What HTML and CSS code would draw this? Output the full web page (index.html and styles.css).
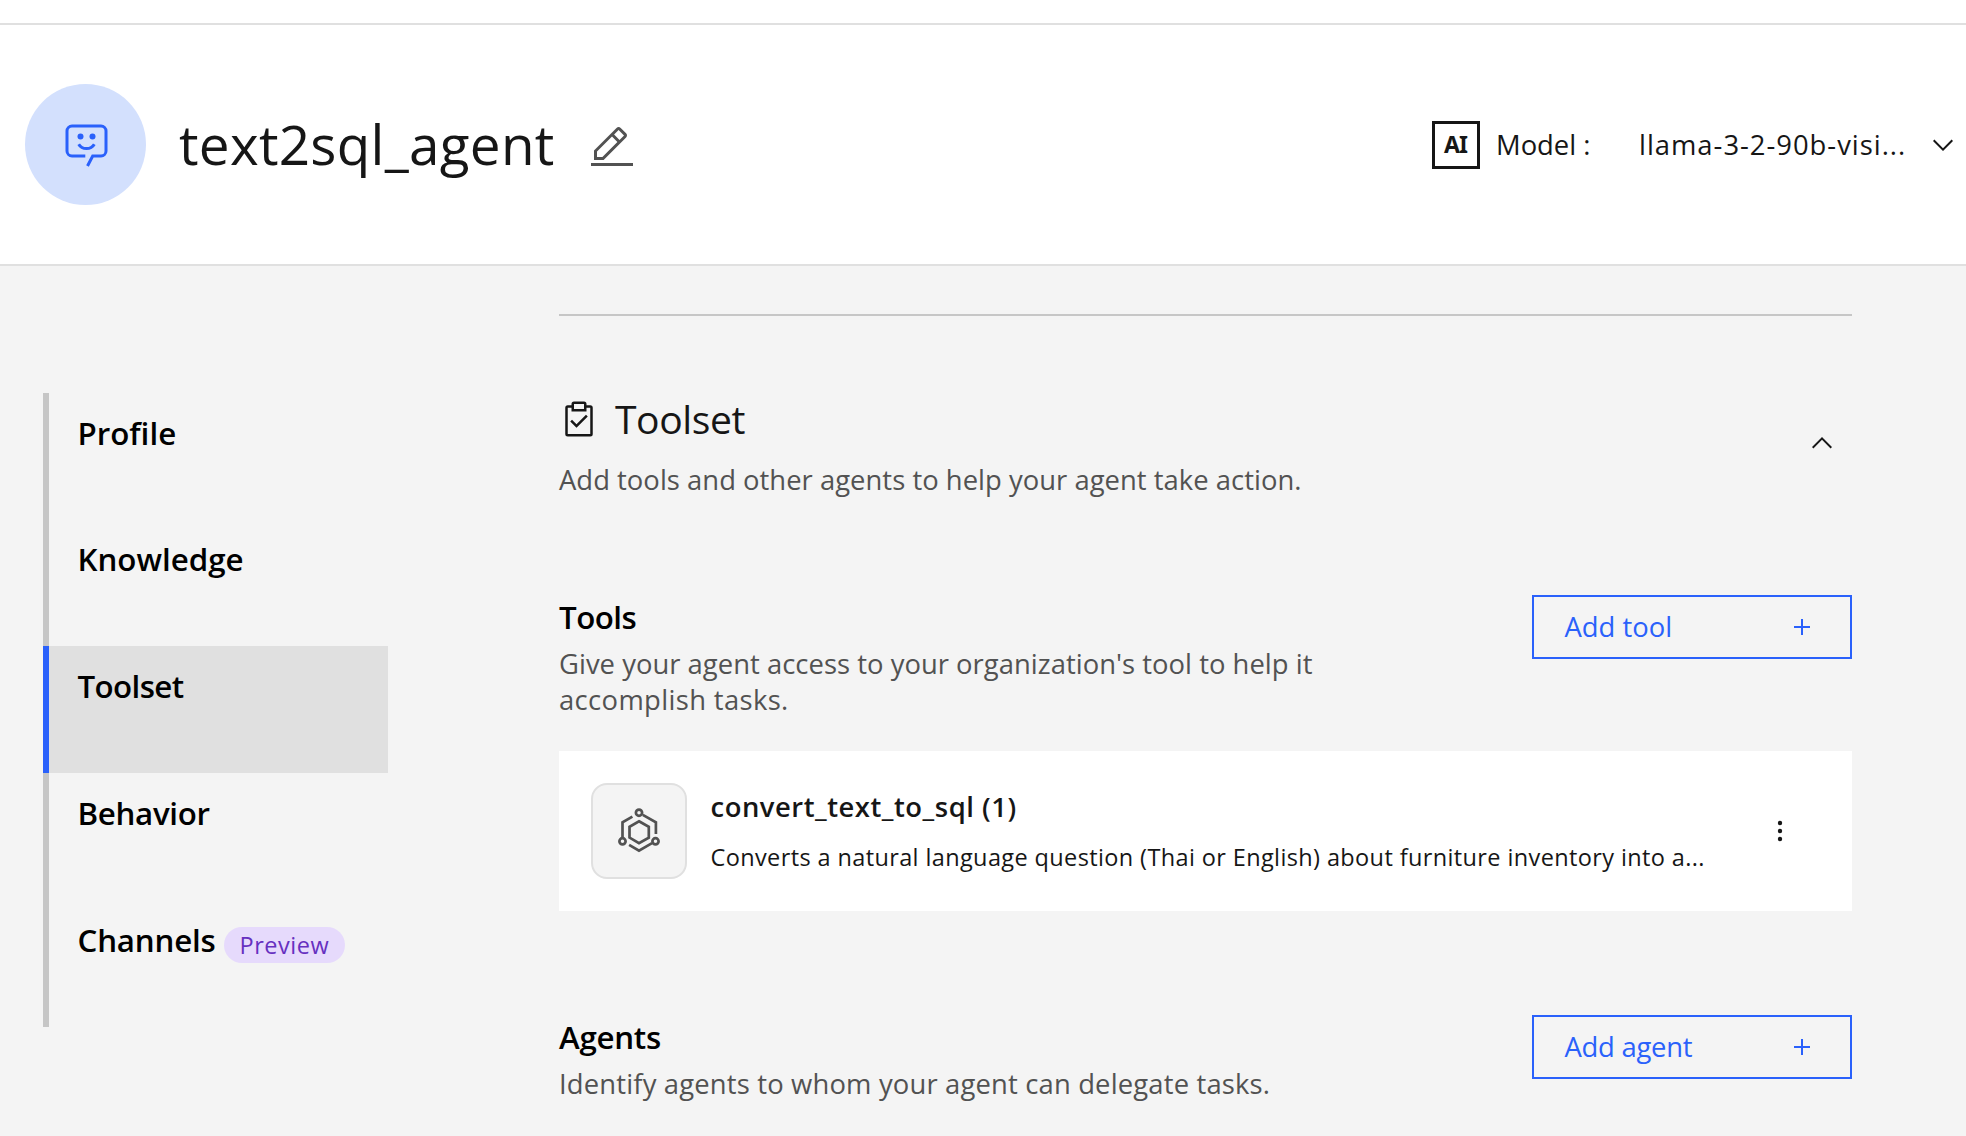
FILE: index.html
```
<!DOCTYPE html>
<html lang="en">
<head>
<meta charset="utf-8">
<title>text2sql_agent</title>
<link rel="stylesheet" href="styles.css">
</head>
<body>
<div class="topbar"></div>
<header class="header">
  <div class="avatar">
    <svg width="48" height="52" viewBox="0 0 48 52" fill="none" stroke="currentColor" stroke-width="3">
      <path d="M23.300 37H10a5 5 0 0 1-5-5V12a5 5 0 0 1 5-5h29a5 5 0 0 1 5 5v20a5 5 0 0 1-5 5h-8.300L25.500 47"/>
      <path d="M16.700 25.200c2 3.500 5 4.400 7.800 4.400s5.800-.9 7.800-4.400"/>
      <circle cx="18.500" cy="17.500" r="3" fill="currentColor" stroke="none"/>
      <circle cx="30.500" cy="17.500" r="3" fill="currentColor" stroke="none"/>
    </svg>
  </div>
  <h1 class="title">text2sql_agent</h1>
  <svg class="edit" width="48" height="48" viewBox="0 0 32 32" fill="currentColor"><path d="M2 26h28v2H2zM25.4 9c.8-.8.8-2 0-2.800l-3.600-3.600c-.8-.8-2-.8-2.800 0l-15 15V24h6.400l15-15zM20.400 4L24 7.600l-3 3L17.400 7l3-3zM6 22v-3.600l10-10 3.600 3.600-10 10H6z"/></svg>
  <div class="model">
    <span class="ai">AI</span>
    <span class="model-label">Model :</span>
    <span class="model-name">llama-3-2-90b-visi...</span>
    <svg width="32" height="32" viewBox="0 0 16 16" fill="currentColor"><path d="M8 11L3 6l.7-.7L8 9.600l4.300-4.300.7.7z"/></svg>
  </div>
</header>
<div class="layout">
  <nav class="nav">
    <a class="nav-item">Profile</a>
    <a class="nav-item">Knowledge</a>
    <a class="nav-item active">Toolset</a>
    <a class="nav-item">Behavior</a>
    <a class="nav-item"><span class="nav-label">Channels</span><span class="tag">Preview</span></a>
  </nav>
  <main class="content">
    <section class="section-head">
      <div>
        <h2 class="section-title">
          <svg width="40" height="40" viewBox="0 0 32 32" fill="currentColor"><path d="M14 20.180L10.410 16.590 9 18l5 5 9-9-1.410-1.420z"/><path d="M25 5h-3V4a2 2 0 0 0-2-2h-8a2 2 0 0 0-2 2v1H7a2 2 0 0 0-2 2v21a2 2 0 0 0 2 2h18a2 2 0 0 0 2-2V7a2 2 0 0 0-2-2zM12 4h8v4h-8zM25 28H7V7h3v3h12V7h3z"/></svg>
          <span>Toolset</span>
        </h2>
        <p class="desc section-desc">Add tools and other agents to help your agent take action.</p>
      </div>
      <svg class="collapse" width="32" height="32" viewBox="0 0 16 16" fill="currentColor"><path d="M8 5l5 5-.7.7L8 6.400l-4.300 4.300L3 10z"/></svg>
    </section>

    <section class="group tools">
      <div class="group-text">
        <h3 class="group-title tight">Tools</h3>
        <p class="desc">Give your agent access to your organization's tool to help it <span class="loose">accomplish tasks.</span></p>
      </div>
      <button class="add"><span>Add tool</span><svg width="32" height="32" viewBox="0 0 32 32" fill="currentColor"><path d="M15 8h2v7h7v2h-7v7h-2v-7H8v-2h7z"/></svg></button>
    </section>

    <article class="card">
      <div class="card-icon">
        <svg width="48" height="52" viewBox="0 -1 48 52" fill="none" stroke="currentColor" stroke-width="2.700">
          <path d="M24 15.300l9.800 5.500v10.800L24 37.200l-9.500-5.600V20.800z"/>
          <path d="M7.500 31.300V16.400l9.900-5.700M27.800 8.800l13.100 7.600v11.500M37 37.200L24 44.700l-9.900-5.900"/>
          <circle cx="24" cy="6.700" r="3.100"/><circle cx="7.500" cy="35.300" r="3.100"/><circle cx="40.500" cy="35.300" r="3.100"/>
        </svg>
      </div>
      <div class="card-text">
        <h4 class="card-title">convert_text_to_sql (1)</h4>
        <p class="card-desc">Converts a natural language question (Thai or English) about furniture inventory into a...</p>
      </div>
      <svg width="32" height="32" viewBox="0 0 32 32" fill="currentColor"><circle cx="16" cy="8" r="2.200"/><circle cx="16" cy="16" r="2.200"/><circle cx="16" cy="24" r="2.200"/></svg>
    </article>

    <section class="group agents">
      <div class="group-text">
        <h3 class="group-title">Agents</h3>
        <p class="desc identify">Identify agents to whom your agent can delegate tasks.</p>
      </div>
      <button class="add agent"><span>Add agent</span><svg width="32" height="32" viewBox="0 0 32 32" fill="currentColor"><path d="M15 8h2v7h7v2h-7v7h-2v-7H8v-2h7z"/></svg></button>
    </section>
  </main>
</div>
</body>
</html>
```
FILE: styles.css
```
* { box-sizing: border-box; margin: 0; padding: 0; }
html, body { height: 100%; overflow: hidden; }
body {
  background: #f4f4f4;
  color: #161616;
  font-family: "Open Sans", "Noto Sans", sans-serif;
  font-size: 27.4px;
  font-weight: 400;
}
svg { display: block; flex: none; }

.topbar { height: 25px; background: #fff; border-bottom: 2px solid #e0e0e0; }

.header {
  display: flex;
  align-items: center;
  height: 241px;
  padding-left: 25px;
  background: #fff;
  border-bottom: 2px solid #e0e0e0;
}
.avatar {
  display: flex;
  align-items: center;
  justify-content: center;
  flex: none;
  width: 121px;
  height: 121px;
  border-radius: 50%;
  background: #d3e0fd;
  color: #2a61fb;
}
.title {
  width: 442px;
  padding: 0 0 2px 33px;
  font-size: 54.8px;
  font-weight: 400;
  line-height: 72px;
  letter-spacing: 0.3px;
  white-space: nowrap;
}
.edit { margin-top: 6px; color: #525252; }
.model {
  display: flex;
  align-items: center;
  width: 534px;
  margin-left: auto;
  line-height: 36px;
  white-space: nowrap;
}
.ai {
  width: 48px;
  height: 48px;
  margin-right: 16px;
  padding-right: 1px;
  border: 3px solid #161616;
  font: 700 23px/41px "Noto Sans", sans-serif;
  letter-spacing: -1px;
  text-align: center;
}
.model-label { width: 143px; }
.model-name { width: 288px; letter-spacing: 0.99px; }

.layout { display: flex; }
.nav { flex: none; width: 345px; margin: 127px 0 0 43px; }
.nav-item {
  display: flex;
  height: 127px;
  padding: 19.5px 0 0 28.5px;
  border-left: 6px solid #c6c6c6;
  color: #000;
  font-size: 31.3px;
  font-weight: 600;
  line-height: 40px;
}
.nav-item:nth-child(-n+2) { height: 126.5px; }
.nav-item.active { border-left-color: #2a61fb; background: #e0e0e0; letter-spacing: -0.6px; }
.nav-item:nth-child(4) { letter-spacing: -0.32px; }
.nav-label { width: 146.5px; letter-spacing: -0.2px; }
.tag {
  width: 121px;
  height: 36px;
  margin-top: 7px;
  padding-left: 15.5px;
  border-radius: 18px;
  background: #e6dafc;
  color: #6630c0;
  font-size: 23.5px;
  font-weight: 400;
  line-height: 36px;
  letter-spacing: 0.53px;
}

.content { flex: none; width: 1293px; margin: 48px 0 0 171px; border-top: 2px solid #c6c6c6; }
.section-head { display: flex; justify-content: space-between; padding: 79px 14px 0 0; }
.section-title {
  display: flex;
  align-items: center;
  gap: 16px;
  font-size: 39.1px;
  font-weight: 400;
  line-height: 48px;
  letter-spacing: -0.42px;
}
.desc { color: #525252; line-height: 36px; letter-spacing: 0.03px; }
.section-desc { margin-top: 19px; }
.loose { letter-spacing: 0.36px; }
.desc.identify { letter-spacing: 0.17px; }
.collapse { margin-top: 32px; }

.group { display: flex; justify-content: space-between; align-items: flex-start; }
.tools { margin-top: 97px; }
.agents { margin-top: 104px; }
.group-text { width: 762px; padding-top: 2px; }
.group-title {
  margin-bottom: 9px;
  color: #000;
  font-size: 31.3px;
  font-weight: 600;
  line-height: 40px;
  letter-spacing: -0.27px;
}
.group-title.tight { letter-spacing: -0.53px; }
.add {
  display: flex;
  align-items: center;
  justify-content: space-between;
  width: 320px;
  height: 64px;
  padding: 0 32px 0 30.5px;
  border: 2px solid #2a61fb;
  background: transparent;
  color: #2a61fb;
  font: inherit;
}
.add span { padding-bottom: 1.5px; }
.add.agent { letter-spacing: -0.24px; }

.card { display: flex; align-items: center; height: 160px; margin-top: 33px; padding: 0 56px 0 32px; background: #fff; }
.card-icon {
  display: flex;
  align-items: center;
  justify-content: center;
  flex: none;
  width: 96px;
  height: 96px;
  border: 2px solid #e0e0e0;
  border-radius: 16px;
  background: #f4f4f4;
  color: #525252;
}
.card-text { flex: 1; padding-left: 23.5px; white-space: nowrap; }
.card-title { font-size: 27.4px; font-weight: 600; line-height: 36px; letter-spacing: 0.53px; }
.card-desc { margin-top: 16px; font-size: 23.5px; line-height: 32px; letter-spacing: 0.38px; }
```
